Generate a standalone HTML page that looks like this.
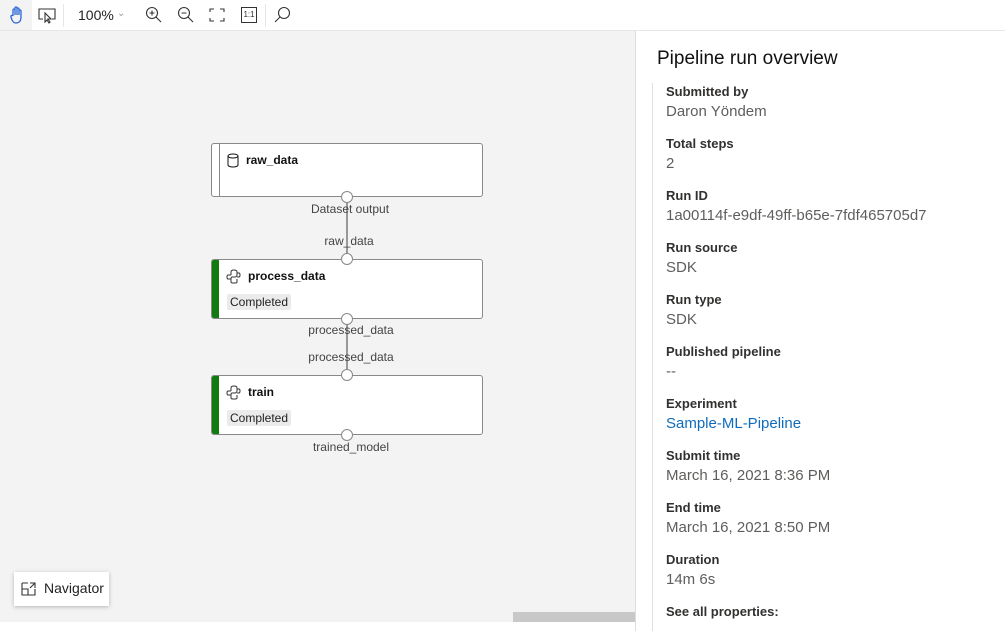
<!DOCTYPE html>
<html><head><meta charset="utf-8"><style>
*{margin:0;padding:0;box-sizing:border-box}
html,body{width:1005px;height:631px;overflow:hidden}
body{background:#fff;font-family:"Segoe UI","Liberation Sans",sans-serif;position:relative}
.tb{position:absolute;left:0;top:0;width:1005px;height:31px;background:#fff;border-bottom:1px solid #e6e6e6}
.canvas{position:absolute;left:0;top:31px;width:635px;height:591px;background:#f3f3f3}
.node{position:absolute;left:211px;width:272px;background:#fff;border:1px solid #8a8886;border-radius:3px;overflow:hidden}
.node .bar{position:absolute;left:0;top:0;bottom:0;width:7px;background:#107c10}
.node .t{position:absolute;left:36px;top:9px;font-size:12px;font-weight:bold;color:#111}
.badge{position:absolute;left:15px;top:34px;background:#ebebeb;border-radius:2px;font-size:12px;padding:0 3px;line-height:16px;color:#222}
.port{position:absolute;width:12px;height:12px;border:1px solid #8a8886;background:#fff;border-radius:50%}
.lbl{position:absolute;font-size:12px;color:#444;transform:translateX(-50%);white-space:nowrap}
.panel{position:absolute;left:635px;top:31px;width:370px;height:600px;background:#fff;border-left:1px solid #e1dfdd}
.vl{position:absolute;left:16px;top:52px;width:1px;height:560px;background:#e1dfdd}
.row{position:absolute;left:30px}
.row b{display:block;font-size:13px;font-weight:bold;color:#323130;line-height:18px}
.row span{display:block;font-size:15px;color:#605e5c;line-height:22px}
</style></head><body>
<div class="tb">
 <div style="position:absolute;left:0;top:0;width:32px;height:30px;background:#f3f3f3"></div>
 <svg style="position:absolute;left:9px;top:6px" width="16" height="18" viewBox="0 0 16 18" fill="none" stroke="#2b66d9" stroke-width="1.3"><path d="M4 10V4a1 1 0 0 1 2 0v5V2a1 1 0 0 1 2 0v7V3a1 1 0 0 1 2 0v6V5a1 1 0 0 1 2 0v6c0 4-2 6-5 6-2 0-3-1-4-3L2 11a1 1 0 0 1 2-1z"/></svg>
 <svg style="position:absolute;left:38px;top:8px" width="18" height="16" viewBox="0 0 18 16" fill="none" stroke="#333" stroke-width="1.1"><path d="M5 11H1V1h16v10h-3M7 5l0 9 2-2 2 3 1-1-2-3h3z"/></svg>
 <div style="position:absolute;left:63px;top:4px;width:1px;height:23px;background:#e6e6e6"></div>
 <div style="position:absolute;left:78px;top:7px;font-size:14px;color:#222">100%</div>
 <div style="position:absolute;left:117px;top:8px;font-size:10px;color:#999">&#8964;</div>
 <svg style="position:absolute;left:145px;top:6px" width="18" height="18" fill="none" stroke="#333" stroke-width="1.1"><circle cx="7" cy="7" r="5.5"/><path d="M11 11l5 5M4.5 7h5M7 4.5v5"/></svg>
 <svg style="position:absolute;left:177px;top:6px" width="18" height="18" fill="none" stroke="#333" stroke-width="1.1"><circle cx="7" cy="7" r="5.5"/><path d="M11 11l5 5M4.5 7h5"/></svg>
 <svg style="position:absolute;left:209px;top:8px" width="16" height="14" fill="none" stroke="#333" stroke-width="1.1"><path d="M1 4V1h4M11 1h4v3M15 10v3h-4M5 13H1v-3"/></svg>
 <div style="position:absolute;left:241px;top:7px;width:16px;height:16px;border:1px solid #333;font-size:8px;line-height:14px;text-align:center;color:#333">1:1</div>
 <div style="position:absolute;left:265px;top:4px;width:1px;height:23px;background:#e6e6e6"></div>
 <svg style="position:absolute;left:273px;top:6px" width="18" height="18" fill="none" stroke="#333" stroke-width="1.1"><circle cx="11" cy="7" r="5.5"/><path d="M7 11l-5 5"/></svg>
</div>
<div class="canvas">
 <div style="position:absolute;left:513px;top:581px;width:122px;height:10px;background:#c8c8c8"></div>
 <div style="position:absolute;left:14px;top:541px;width:95px;height:34px;background:#fff;box-shadow:0 1px 4px rgba(0,0,0,.25)">
  <svg style="position:absolute;left:7px;top:10px" width="15" height="14" fill="none" stroke="#333" stroke-width="1.1"><path d="M1 1h6M1 1v12h13V7M1 7h6v6M9 1h5v5M14 1L9 6"/></svg>
  <span style="position:absolute;left:30px;top:8px;font-size:14px;color:#222">Navigator</span>
 </div>
</div>
<div style="position:absolute;left:346px;top:202px;width:2px;height:52px;background:#999"></div>
<div style="position:absolute;left:346px;top:318px;width:2px;height:52px;background:#999"></div>
<div class="node" style="top:143px;height:54px"><div style="position:absolute;left:7px;top:0;bottom:0;width:1px;background:#8a8886"></div>
 <svg style="position:absolute;left:15px;top:9px" width="12" height="15" fill="none" stroke="#111" stroke-width="1"><ellipse cx="6" cy="3" rx="5" ry="2"/><path d="M1 3v9c0 1 2 2 5 2s5-1 5-2V3"/></svg>
 <div class="t" style="left:34px">raw_data</div></div>
<div class="node" style="top:259px;height:60px"><div class="bar"></div>
 <svg style="position:absolute;left:14px;top:9px" width="15" height="15" fill="none" stroke="#333" stroke-width="1"><path d="M5 6V3c0-1 1-2 3-2s3 1 3 2v3c0 1-1 2-2 2H6c-1 0-1 1-1 2v3c0 1 1 1 3 1s3 0 3-1v-3M5 6H2c-1 0-1 1-1 2s0 2 1 2h3M11 8h2c1 0 1-1 1-2s0-2-1-2h-2"/></svg>
 <div class="t">process_data</div><div class="badge">Completed</div></div>
<div class="node" style="top:375px;height:60px"><div class="bar"></div>
 <svg style="position:absolute;left:14px;top:9px" width="15" height="15" fill="none" stroke="#333" stroke-width="1"><path d="M5 6V3c0-1 1-2 3-2s3 1 3 2v3c0 1-1 2-2 2H6c-1 0-1 1-1 2v3c0 1 1 1 3 1s3 0 3-1v-3M5 6H2c-1 0-1 1-1 2s0 2 1 2h3M11 8h2c1 0 1-1 1-2s0-2-1-2h-2"/></svg>
 <div class="t">train</div><div class="badge">Completed</div></div>
<div class="port" style="left:341px;top:191px"></div>
<div class="port" style="left:341px;top:253px"></div>
<div class="port" style="left:341px;top:313px"></div>
<div class="port" style="left:341px;top:369px"></div>
<div class="port" style="left:341px;top:429px"></div>
<div class="lbl" style="left:350px;top:202px">Dataset output</div>
<div class="lbl" style="left:349px;top:234px">raw_data</div>
<div class="lbl" style="left:351px;top:323px">processed_data</div>
<div class="lbl" style="left:351px;top:350px">processed_data</div>
<div class="lbl" style="left:351px;top:440px">trained_model</div>
<div class="panel">
 <div style="position:absolute;left:21px;top:17px;font-size:19px;color:#111">Pipeline run overview</div>
 <div class="vl"></div>
 <div class="row" style="top:52px"><b>Submitted by</b><span>Daron Yöndem</span></div>
 <div class="row" style="top:104px"><b>Total steps</b><span>2</span></div>
 <div class="row" style="top:156px"><b>Run ID</b><span>1a00114f-e9df-49ff-b65e-7fdf465705d7</span></div>
 <div class="row" style="top:208px"><b>Run source</b><span>SDK</span></div>
 <div class="row" style="top:260px"><b>Run type</b><span>SDK</span></div>
 <div class="row" style="top:312px"><b>Published pipeline</b><span>--</span></div>
 <div class="row" style="top:364px"><b>Experiment</b><span style="color:#0f6cbd">Sample-ML-Pipeline</span></div>
 <div class="row" style="top:416px"><b>Submit time</b><span>March 16, 2021 8:36 PM</span></div>
 <div class="row" style="top:468px"><b>End time</b><span>March 16, 2021 8:50 PM</span></div>
 <div class="row" style="top:520px"><b>Duration</b><span>14m 6s</span></div>
 <div class="row" style="top:572px"><b>See all properties:</b></div>
</div>
</body></html>
